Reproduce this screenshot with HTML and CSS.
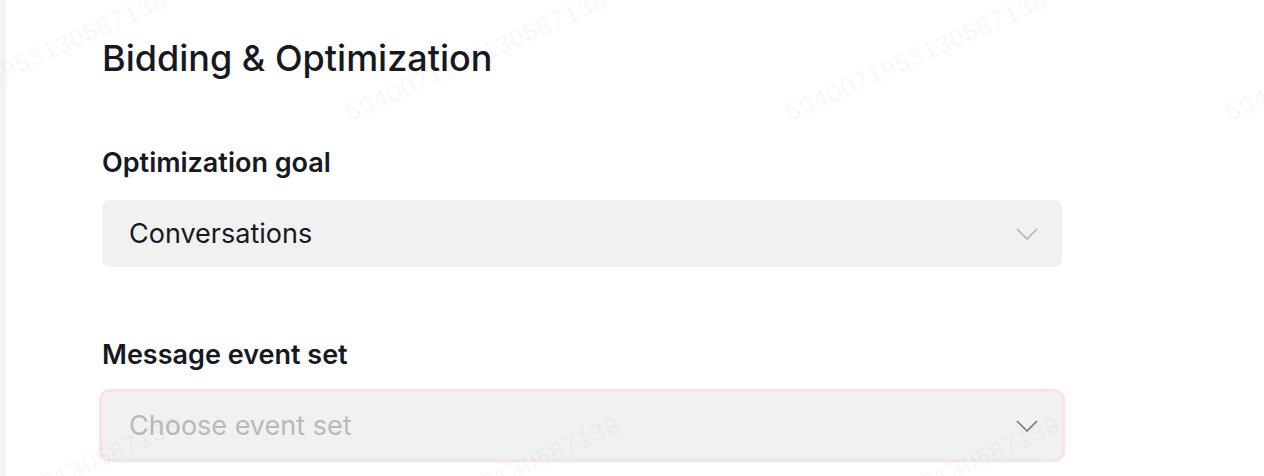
FILE: index.html
```html
<!DOCTYPE html>
<html lang="en">
<head>
  <meta charset="UTF-8">
  <title>Bidding &amp; Optimization</title>
  <link rel="stylesheet" href="styles.css">
</head>
<body>
  <div class="page">
    <div class="side-strip"></div>
    <div class="content">
      <h2 class="section-title">Bidding &amp; Optimization</h2>

      <div class="field">
        <label class="field-label">Optimization goal</label>
        <div class="select">
          <span class="select-value">Conversations</span>
          <svg class="chevron" width="22" height="12" viewBox="0 0 22 12">
            <path d="M1 1 L11 11 L21 1" fill="none" stroke="#b4b4b4" stroke-width="1.6"/>
          </svg>
        </div>
      </div>

      <div class="field">
        <label class="field-label">Message event set</label>
        <div class="select select-error">
          <span class="select-placeholder">Choose event set</span>
          <svg class="chevron" width="22" height="12" viewBox="0 0 22 12">
            <path d="M1 1 L11 11 L21 1" fill="none" stroke="#7a7a7a" stroke-width="1.6"/>
          </svg>
        </div>
      </div>
    </div>

    <div class="watermark">
      <span style="left:-88px;top:100px">6940071953130587138</span>
      <span style="left:352px;top:100px">6940071953130587138</span>
      <span style="left:792px;top:100px">6940071953130587138</span>
      <span style="left:1232px;top:100px">6940071953130587138</span>
      <span style="left:-75px;top:525px">6940071953130587138</span>
      <span style="left:365px;top:525px">6940071953130587138</span>
      <span style="left:805px;top:525px">6940071953130587138</span>
    </div>
  </div>
</body>
</html>
```

FILE: styles.css
```css
* {
  margin: 0;
  padding: 0;
  box-sizing: border-box;
  font-family: Inter, "Noto Sans", sans-serif;
}

body {
  background-color: #fff;
  color: #161823;
}

.page {
  position: relative;
  display: flex;
  height: 476px;
  overflow: hidden;
}

.side-strip {
  width: 6px;
  background-color: #f3f3f3;
  flex-shrink: 0;
}

.content {
  padding: 36px 0 0 96px;
  width: 1056px;
}

.section-title {
  font-size: 36px;
  font-weight: 500;
  line-height: 44px;
  margin-bottom: 66px;
}

.field {
  margin-bottom: 71px;
}

.field-label {
  display: block;
  font-size: 27px;
  font-weight: 600;
  line-height: 34px;
  margin-bottom: 20px;
}

.select {
  display: flex;
  align-items: center;
  justify-content: space-between;
  height: 67px;
  padding: 0 24px 0 27px;
  background-color: #f1f1f2;
  border-radius: 8px;
}

.select-error {
  box-shadow: 0 0 0 3px #ffe0e5;
}

.select-value {
  font-size: 27px;
  color: #161823;
}

.select-placeholder {
  font-size: 27px;
  color: #b9b9bb;
}

.watermark {
  position: absolute;
  inset: 0;
  pointer-events: none;
}

.watermark span {
  position: absolute;
  font-family: "Liberation Sans", sans-serif;
  font-size: 25px;
  letter-spacing: 1px;
  color: rgba(0, 0, 0, 0.05);
  transform: rotate(-24deg);
  transform-origin: left bottom;
  white-space: nowrap;
  line-height: 1;
}
```
